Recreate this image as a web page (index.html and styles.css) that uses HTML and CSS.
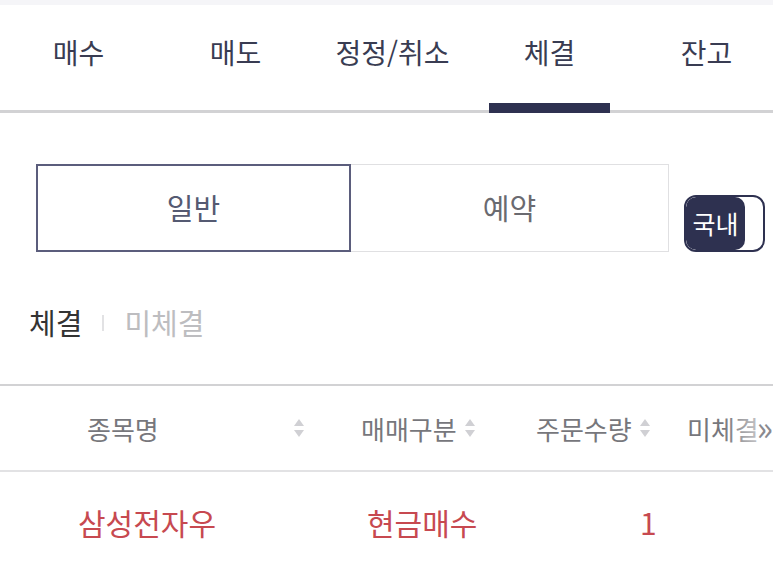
FILE: index.html
```html
<!DOCTYPE html>
<html lang="ko">

<head>
    <meta charset="UTF-8">
    <meta name="viewport" content="width=device-width, initial-scale=1.0">
    <title>체결</title>
    <link rel="stylesheet" href="styles.css">
</head>

<body>
    <div class="page">
        <div class="topbar"></div>
        <!-- 상단 탭 -->
        <div class="tabs">
            <div class="tab">매수</div>
            <div class="tab">매도</div>
            <div class="tab">정정/취소</div>
            <div class="tab active">체결</div>
            <div class="tab">잔고</div>
        </div>

        <!-- 일반 / 예약 -->
        <div class="segment-row">
            <div class="segment">
                <div class="seg on">일반</div>
                <div class="seg">예약</div>
            </div>
            <div class="toggle">
                <div class="knob">국내</div>
            </div>
        </div>

        <div class="subtabs">
            <span class="sub on">체결</span>
            <span class="bar"></span>
            <span class="sub">미체결</span>
        </div>

        <!-- 체결 내역 -->
        <div class="table">
            <div class="thead">
                <div class="th c1"><span>종목명</span><i class="sort"></i></div>
                <div class="th c2"><span>매매구분</span><i class="sort"></i></div>
                <div class="th c3"><span>주문수량</span><i class="sort"></i></div>
                <div class="th c4"><span>미체결</span></div>
                <div class="fade"></div>
                <span class="more">»</span>
            </div>
            <div class="row">
                <div class="td c1">삼성전자우</div>
                <div class="td c2">현금매수</div>
                <div class="td c3">1</div>
            </div>
        </div>
    </div>
</body>

</html>
```

FILE: styles.css
```css
body {
    margin: 0;
    padding: 0;
    background-color: #fff;
    font-family: "Noto Sans CJK KR", "Noto Sans", sans-serif;
}

.page {
    width: 773px;
    height: 563px;
    overflow: hidden;
}

.topbar {
    height: 5px;
    background-color: #f5f5f8;
}

.tabs {
    display: flex;
    width: 785px;
    height: 105px;
    border-bottom: 3px solid #d2d2d4;
}

.tab {
    position: relative;
    width: 157px;
    flex: none;
    text-align: center;
    font-size: 28px;
    line-height: 94px;
    color: #393c52;
}

.tab.active::after {
    content: "";
    position: absolute;
    left: 18px;
    right: 18px;
    bottom: -3px;
    height: 10px;
    background-color: #2e3150;
}

.segment-row {
    display: flex;
    align-items: flex-end;
    margin-top: 51px;
    padding-left: 36px;
}

.segment {
    display: flex;
    height: 88px;
}

.seg {
    box-sizing: border-box;
    width: 318px;
    border: 1px solid #e0e0e2;
    border-left: none;
    text-align: center;
    font-size: 29px;
    line-height: 84px;
    color: #6a6a70;
}

.seg.on {
    width: 315px;
    border: 2px solid #5b5d7c;
    line-height: 82px;
    color: #555a72;
}

.toggle {
    box-sizing: border-box;
    width: 81px;
    height: 57px;
    margin-left: 15px;
    border: 2px solid #2e3150;
    border-radius: 12px;
    overflow: hidden;
}

.knob {
    width: 59px;
    height: 100%;
    background-color: #2e3150;
    border-radius: 10px;
    color: #fff;
    font-size: 25px;
    line-height: 52px;
    text-align: center;
}

.subtabs {
    display: flex;
    align-items: center;
    height: 60px;
    margin-top: 40px;
    padding-left: 29px;
    font-size: 29px;
}

.sub {
    color: #bdbdc0;
}

.sub.on {
    color: #333;
}

.subtabs .bar {
    width: 2px;
    height: 16px;
    margin: 2px 20px 0;
    background-color: #e2e2e4;
}

.table {
    margin-top: 32px;
    border-top: 2px solid #d2d2d4;
}

.thead {
    position: relative;
    display: flex;
    height: 84px;
    border-bottom: 2px solid #e2e2e4;
    font-size: 26px;
    color: #77777c;
}

.th,
.td {
    box-sizing: border-box;
    display: flex;
    align-items: center;
    flex: none;
    white-space: nowrap;
}

.c1 {
    width: 320px;
}

.c2 {
    width: 180px;
}

.c3 {
    width: 170px;
}

.th.c1 {
    padding-left: 87px;
    padding-right: 16px;
}

.th.c1 .sort {
    margin-left: auto;
}

.th.c2 {
    padding-left: 41px;
}

.th.c3 {
    padding-left: 36px;
}

.th.c4 {
    padding-left: 17px;
}

.sort {
    position: relative;
    width: 10px;
    height: 22px;
    margin-left: 8px;
}

.sort::before,
.sort::after {
    content: "";
    position: absolute;
    left: 0;
    border-left: 5px solid transparent;
    border-right: 5px solid transparent;
}

.sort::before {
    top: 2px;
    border-bottom: 7px solid #d0d0d4;
}

.sort::after {
    bottom: 2px;
    border-top: 7px solid #d0d0d4;
}

.fade {
    position: absolute;
    top: 0;
    right: 0;
    width: 50px;
    height: 100%;
    background: linear-gradient(to right, rgba(255, 255, 255, 0), rgba(255, 255, 255, 0.8));
}

.more {
    position: absolute;
    top: 0;
    right: 0;
    line-height: 82px;
    font-size: 34px;
    color: #8a8a90;
}

.row {
    display: flex;
    height: 100px;
    font-size: 30px;
    color: #c74950;
}

.td.c1 {
    padding-left: 78px;
}

.td.c2 {
    padding-left: 47px;
}

.td.c3 {
    padding-left: 140px;
}
```
